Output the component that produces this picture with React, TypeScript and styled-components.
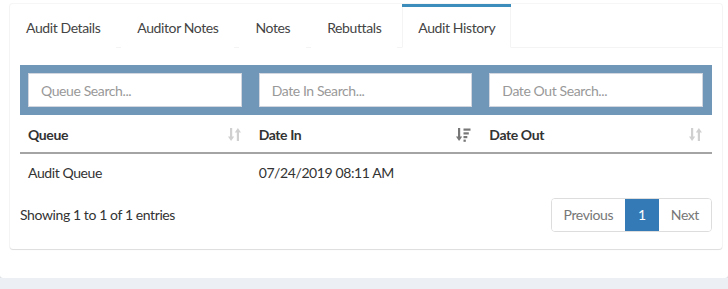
import * as React from 'react';
import styled, { createGlobalStyle } from 'styled-components';

const GlobalStyle = createGlobalStyle`
    body {
        margin: 0;
        background: #ecf0f5;
        font-family: Lato, "Liberation Sans", sans-serif;
        font-size: 14px;
        letter-spacing: -0.4px;
        color: #333;
    }
    * {
        box-sizing: border-box;
    }
`;

const Box = styled.div`
    background: #fff;
    height: 278px;
    padding: 4px 6px 0 10px;
    border-radius: 0 0 3px 3px;
    box-shadow: 0 1px 1px rgba(0, 0, 0, 0.12);
`;

const Card = styled.div`
    background: #fff;
    border-radius: 3px;
    box-shadow: 0 1px 1px rgba(0, 0, 0, 0.1), 0 0 0 1px #f6f6f6;
`;

const TabBar = styled.ul`
    display: flex;
    gap: 5px;
    margin: 0;
    padding: 0;
    list-style: none;
    border-bottom: 1px solid #f4f4f4;
`;

const Tab = styled.li<{ $active?: boolean }>`
    border-top: 3px solid ${p => (p.$active ? '#3c8dbc' : 'transparent')};
    margin-bottom: -1px;

    a {
        display: block;
        padding: 11px 15px 9px;
        line-height: 20px;
        color: #444;
        text-decoration: none;
        border: 1px solid transparent;
        border-top: none;
        border-left-color: ${p => (p.$active ? '#f4f4f4' : 'transparent')};
        border-right-color: ${p => (p.$active ? '#f4f4f4' : 'transparent')};
        background: #fff;
    }
`;

const TabContent = styled.div`
    padding: 17px 10px 17px 10px;
`;

const FilterBar = styled.div`
    display: grid;
    grid-template-columns: 1fr 1fr 1fr;
    gap: 17px;
    padding: 8px 9px 8px 8px;
    background: #7096b8;
`;

const SearchInput = styled.input`
    display: block;
    width: 100%;
    height: 34px;
    padding: 6px 12px;
    font-family: inherit;
    font-size: 14px;
    letter-spacing: -0.4px;
    color: #555;
    border: 1px solid #d2d6de;
    outline: none;

    &::placeholder {
        color: #999;
    }
`;

const Table = styled.table`
    width: 100%;
    table-layout: fixed;
    border-collapse: collapse;
`;

const Th = styled.th`
    padding: 9px 10px 7px 8px;
    line-height: 21px;
    text-align: left;
    font-weight: 700;
    color: #333;
    border-bottom: 2px solid #a4a4a4;
`;

const HeadCell = styled.div`
    display: flex;
    align-items: center;
    justify-content: space-between;
`;

const Td = styled.td`
    padding: 9px 8px 7px;
    line-height: 20px;
    color: #333;
`;

const Footer = styled.div`
    display: flex;
    align-items: center;
    justify-content: space-between;
    margin-top: 8px;
`;

const Info = styled.div`
    line-height: 20px;
    padding-bottom: 1px;
`;

const Pager = styled.ul`
    display: flex;
    margin: 0;
    padding: 0;
    list-style: none;
    border: 1px solid #ddd;
    border-radius: 4px;
    overflow: hidden;
`;

const PageItem = styled.li<{ $active?: boolean }>`
    padding: 6px 12px;
    line-height: 20px;
    color: ${p => (p.$active ? '#fff' : '#777')};
    background: ${p => (p.$active ? '#337ab7' : '#fff')};
    & + & {
        border-left: 1px solid ${p => (p.$active ? '#337ab7' : '#ddd')};
    }
`;

const SortIcon = () => (
    <svg width="13" height="15" viewBox="0 0 13 15">
        <g fill="#d0d0d0">
            <rect x="2" y="1" width="2.2" height="9.5" />
            <polygon points="0,9.5 6.2,9.5 3.1,14" />
            <rect x="8.8" y="4.5" width="2.2" height="9.5" />
            <polygon points="6.8,5.5 13,5.5 9.9,1" />
        </g>
    </svg>
);

const SortDescIcon = () => (
    <svg width="15" height="15" viewBox="0 0 15 15">
        <g fill="#777">
            <rect x="2" y="1" width="2.2" height="9.5" />
            <polygon points="0,9.5 6.2,9.5 3.1,14" />
            <rect x="7.5" y="1.5" width="7" height="2.2" />
            <rect x="7.5" y="5.3" width="5.3" height="2.2" />
            <rect x="7.5" y="9" width="3.8" height="2.2" />
            <rect x="7.5" y="12.6" width="2.3" height="2.2" />
        </g>
    </svg>
);

const tabs = ['Audit Details', 'Auditor Notes', 'Notes', 'Rebuttals', 'Audit History'];

const columns = [
    { label: 'Queue', sorted: false },
    { label: 'Date In', sorted: true },
    { label: 'Date Out', sorted: false },
];

const App = (): JSX.Element => (
    <>
        <GlobalStyle />
        <Box>
            <Card>
                <TabBar>
                    {tabs.map(t => (
                        <Tab key={t} $active={t === 'Audit History'}>
                            <a href="#">{t}</a>
                        </Tab>
                    ))}
                </TabBar>
                <TabContent>
                    <FilterBar>
                        <SearchInput placeholder="Queue Search..." />
                        <SearchInput placeholder="Date In Search..." />
                        <SearchInput placeholder="Date Out Search..." />
                    </FilterBar>
                    <Table>
                        <thead>
                            <tr>
                                {columns.map(c => (
                                    <Th key={c.label}>
                                        <HeadCell>
                                            <span>{c.label}</span>
                                            {c.sorted ? <SortDescIcon /> : <SortIcon />}
                                        </HeadCell>
                                    </Th>
                                ))}
                            </tr>
                        </thead>
                        <tbody>
                            <tr>
                                <Td>Audit Queue</Td>
                                <Td>07/24/2019 08:11 AM</Td>
                                <Td></Td>
                            </tr>
                        </tbody>
                    </Table>
                    <Footer>
                        <Info>Showing 1 to 1 of 1 entries</Info>
                        <Pager>
                            <PageItem>Previous</PageItem>
                            <PageItem $active>1</PageItem>
                            <PageItem>Next</PageItem>
                        </Pager>
                    </Footer>
                </TabContent>
            </Card>
        </Box>
    </>
);

export default App;
